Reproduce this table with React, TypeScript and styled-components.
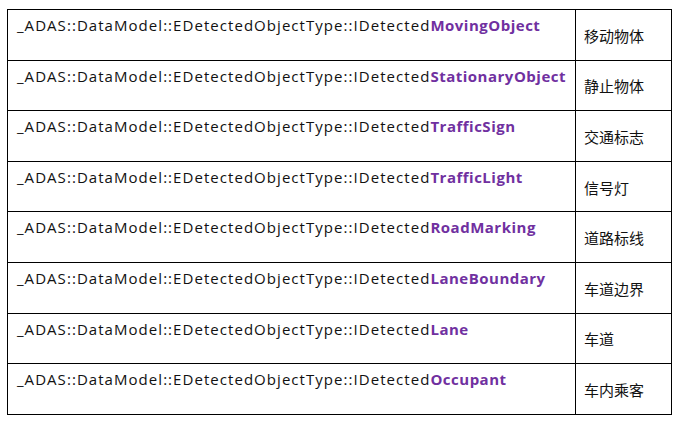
import React from "react";
import styled, { createGlobalStyle } from "styled-components";

const Global = createGlobalStyle`
  html, body { margin: 0; padding: 0; background: #ffffff; }
  body { font-family: "Open Sans", "Noto Sans CJK SC", sans-serif; }
`;

const Page = styled.div`
  padding: 9px 0 0 7px;
`;

const Table = styled.table`
  border-collapse: collapse;
  width: 665px;
  table-layout: fixed;
`;

const Row = styled.tr`
  height: 50.6px;
`;

const NameCell = styled.td`
  width: 558px;
  border: 1px solid #000;
  padding: 5px 0 0 9px;
  vertical-align: top;
  font-family: "Open Sans", sans-serif;
  font-size: 15px;
  letter-spacing: 1.05px;
  color: #111;
  white-space: nowrap;
`;

const Suffix = styled.span`
  font-weight: 700;
  letter-spacing: 0.5px;
  color: #7030a0;
`;

const LabelCell = styled.td`
  border: 1px solid #000;
  padding: 1px 0 0 8px;
  vertical-align: middle;
  font-family: "Noto Sans CJK SC", sans-serif;
  font-size: 15px;
  color: #111;
`;

const rows: [string, string][] = [
  ["MovingObject", "移动物体"],
  ["StationaryObject", "静止物体"],
  ["TrafficSign", "交通标志"],
  ["TrafficLight", "信号灯"],
  ["RoadMarking", "道路标线"],
  ["LaneBoundary", "车道边界"],
  ["Lane", "车道"],
  ["Occupant", "车内乘客"],
];

export default function App() {
  return (
    <>
      <Global />
      <Page>
        <Table>
          <tbody>
            {rows.map(([suffix, label]) => (
              <Row key={suffix}>
                <NameCell>
                  _ADAS::DataModel::EDetectedObjectType::IDetected
                  <Suffix>{suffix}</Suffix>
                </NameCell>
                <LabelCell>{label}</LabelCell>
              </Row>
            ))}
          </tbody>
        </Table>
      </Page>
    </>
  );
}
